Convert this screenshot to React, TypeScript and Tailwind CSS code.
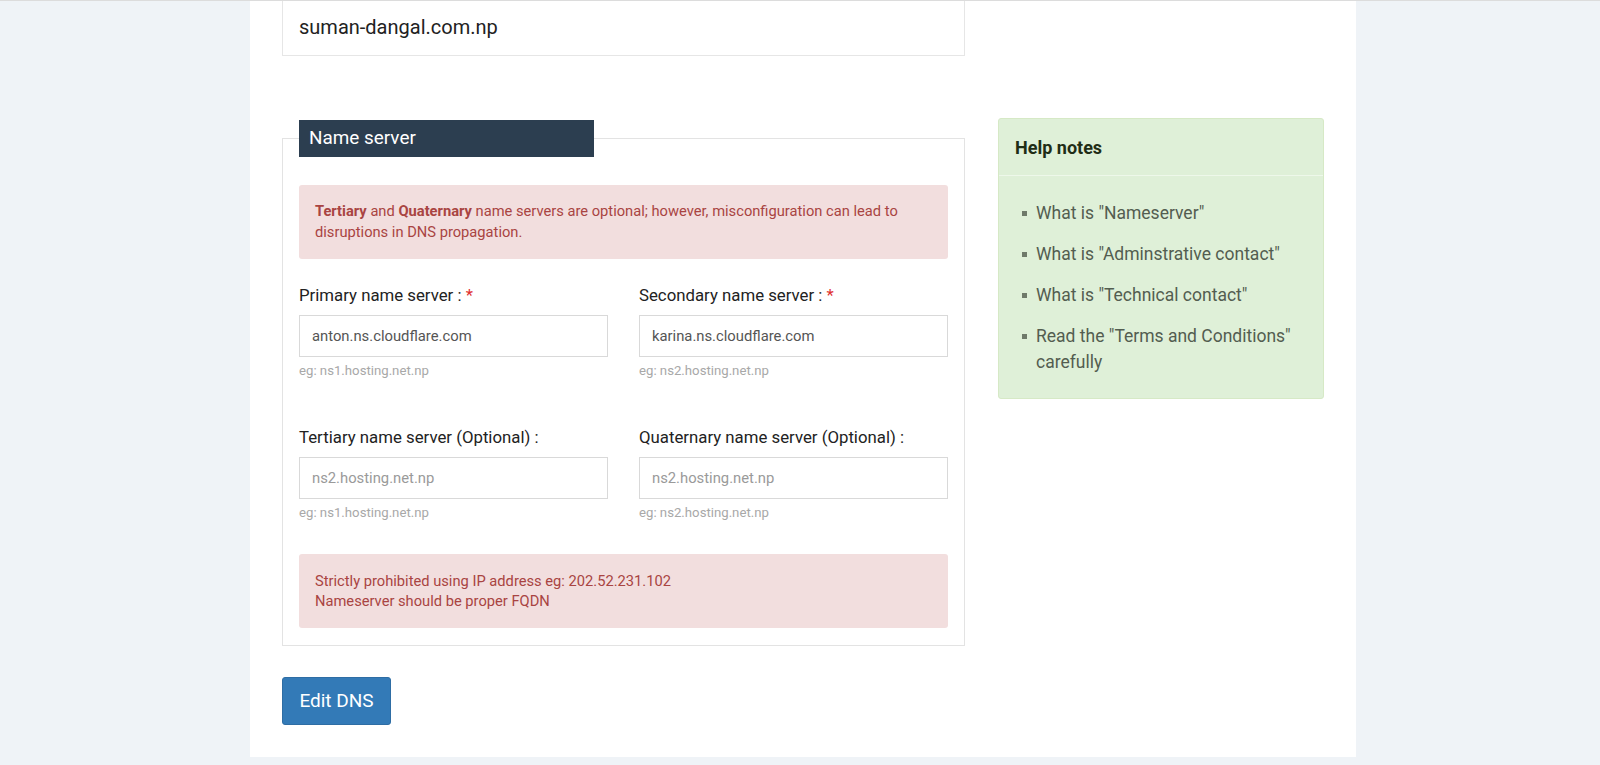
import React from "react";

const helpItems = [
  'What is "Nameserver"',
  'What is "Adminstrative contact"',
  'What is "Technical contact"',
  'Read the "Terms and Conditions" carefully',
];

interface IFieldProps {
  label: string;
  required?: boolean;
  value?: string;
  placeholder?: string;
  hint: string;
}

function NsField(props: IFieldProps) {
  const { label, required, value, placeholder, hint } = props;
  return (
    <div className="flex flex-col">
      <label className="text-[16.8px] leading-[22px] text-[#222]">
        {label}
        {required && <span className="text-[#e0312f]"> *</span>}
      </label>
      <input
        readOnly
        defaultValue={value}
        placeholder={placeholder}
        className="mt-[9px] h-[42px] w-full border border-[#d9d9d9] bg-white px-3 text-[14.8px] text-[#555] outline-none placeholder:text-[#9a9a9a]"
      />
      <div className="mt-[6px] text-[13.2px] leading-4 text-[#a8a8a8]">{hint}</div>
    </div>
  );
}

export default function App() {
  return (
    <div
      className="min-h-[765px] w-full border-t border-[#dcdcdc] bg-[#eff3f7] text-[#222]"
      style={{ fontFamily: "Roboto, 'Liberation Sans', sans-serif" }}
    >
      <div className="ml-[250px] w-[1106px] bg-white px-8 pb-[32px]">
        {/* domain box */}
        <div className="flex h-[55px] w-[683px] items-center border border-t-0 border-[#e6e6e6] px-4 pb-[3px] text-xl text-[#222]">
          suman-dangal.com.np
        </div>

        <div className="mt-[62px] flex items-start gap-[33px]">
          <div className="w-[683px]">
            <fieldset className="mt-[2px] border border-[#e3e3e3] px-4 pb-[17px]">
              <legend className="flex h-[37px] w-[295px] items-center bg-[#2c3e50] pl-[10px] text-[18.9px] text-white">
                Name server
              </legend>
              <div className="mt-[28px] rounded-[3px] bg-[#f2dede] px-4 py-4 text-[14.7px] leading-[21px] text-[#a94442]">
                <span className="font-bold">Tertiary</span> and{" "}
                <span className="font-bold">Quaternary</span> name servers are
                optional; however, misconfiguration can lead to disruptions in
                DNS propagation.
              </div>

              <div className="mt-[25px] grid grid-cols-2 gap-x-[31px] gap-y-[47px]">
                <NsField
                  label="Primary name server :"
                  required
                  value="anton.ns.cloudflare.com"
                  hint="eg: ns1.hosting.net.np"
                />
                <NsField
                  label="Secondary name server :"
                  required
                  value="karina.ns.cloudflare.com"
                  hint="eg: ns2.hosting.net.np"
                />
                <NsField
                  label="Tertiary name server (Optional) :"
                  placeholder="ns2.hosting.net.np"
                  hint="eg: ns1.hosting.net.np"
                />
                <NsField
                  label="Quaternary name server (Optional) :"
                  placeholder="ns2.hosting.net.np"
                  hint="eg: ns2.hosting.net.np"
                />
              </div>

              <div className="mt-[33px] rounded-[3px] bg-[#f2dede] px-4 pb-[17px] pt-[17px] text-[14.7px] leading-5 text-[#a94442]">
                <div>Strictly prohibited using IP address eg: 202.52.231.102</div>
                <div>Nameserver should be proper FQDN</div>
              </div>
            </fieldset>

            <button className="mt-[31px] h-[48px] w-[109px] rounded-[3px] border border-[#2e6da4] bg-[#337ab7] text-[19px] text-white">
              Edit DNS
            </button>
          </div>

          <div className="w-[326px] rounded-[3px] border border-[#d6e9c6] bg-[#dff0d8]">
            <div className="flex h-[57px] items-center border-b border-[#eef8ea] px-4 text-[18px] font-bold text-[#1f2d16]">
              Help notes
            </div>
            <ul className="pb-[23px] pl-[23px] pr-3 pt-[24px]">
              {helpItems.map((i) => (
                <li
                  key={i}
                  className="mb-[15px] flex text-[17.5px] leading-[26px] text-[#535d50] last:mb-0"
                >
                  <span className="mr-[9px] mt-[11px] h-[5px] w-[5px] shrink-0 bg-[#6f7a6a]"></span>
                  <span>{i}</span>
                </li>
              ))}
            </ul>
          </div>
        </div>
      </div>
    </div>
  );
}
